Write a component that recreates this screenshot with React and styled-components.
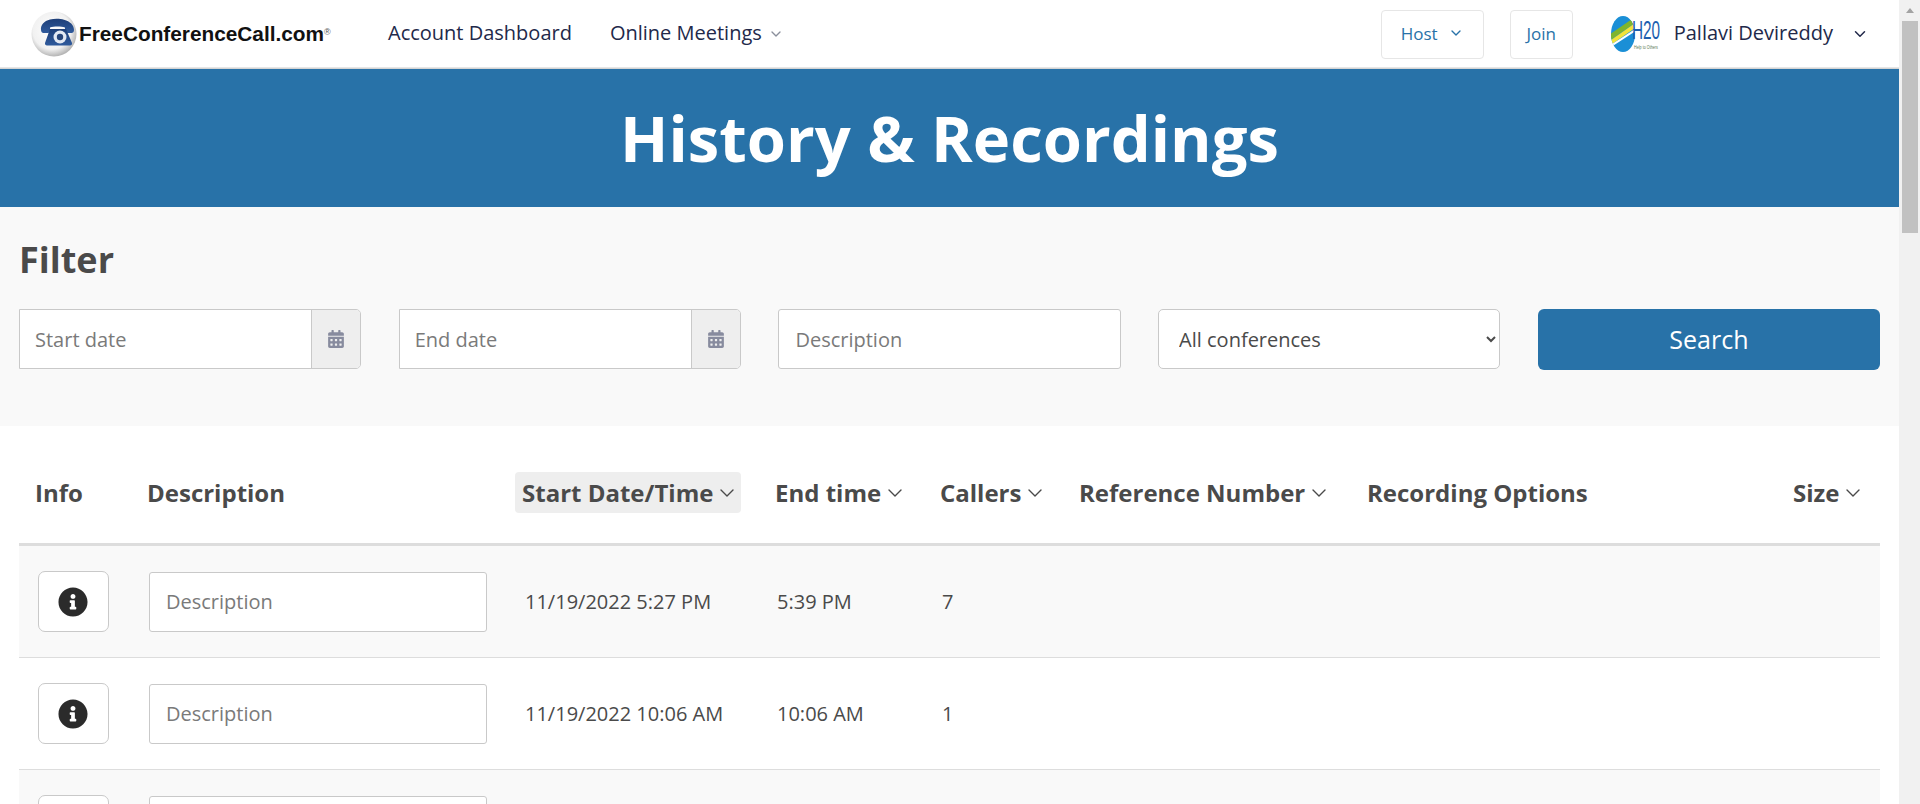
import React from "react";
import styled, { createGlobalStyle } from "styled-components";
import { ChevronDown } from "lucide-react";
import { FaCalendarAlt, FaInfoCircle } from "react-icons/fa";

const Global = createGlobalStyle`
  html, body { margin: 0; height: 804px; overflow: hidden; background: #fff; }
  body { font-family: "Open Sans", "Liberation Sans", sans-serif; color: #4a4a4a; }
  * { box-sizing: border-box; }
`;

const Shell = styled.div`display: flex; height: 804px; overflow: hidden;`;
const Main = styled.main`flex: 1; min-width: 0; overflow: hidden;`;
const Scrollbar = styled.div`
  width: 21px; flex: none; background: #f1f1f1; display: flex; flex-direction: column; align-items: center;
`;
const ScrollArrow = styled.div`
  height: 21px; width: 100%; display: flex; align-items: center; justify-content: center;
  &::before { content: ""; border-left: 4px solid transparent; border-right: 4px solid transparent; border-bottom: 5px solid #a3a3a3; }
`;
const ScrollThumb = styled.div`width: 16px; height: 212px; background: #c1c1c1;`;

const Header = styled.header`
  height: 69px; display: flex; align-items: center; padding-left: 31px; background: #fff;
  border-bottom: 1px solid #d4d4d4; box-shadow: inset 0 -1px 0 #e6e6e6;
`;
const Brand = styled.div`display: flex; align-items: center; width: 357px; flex: none;`;
const BrandName = styled.span`
  font-family: "Liberation Sans", Arial, sans-serif; font-weight: 700; font-size: 20.8px; color: #111; margin-left: 2px;
  sup { font-size: 9px; font-weight: 400; color: #555; vertical-align: 6px; line-height: 0; }
`;
const NavLink = styled.a`
  font-size: 20px; color: #22294a; display: inline-flex; align-items: center; margin: 0 ${p => p.$gap || 0}px 3px 0;
  svg { margin-left: 6px; color: #8a8f9c; margin-top: 2px; }
`;
const RightNav = styled.div`margin-left: auto; display: flex; align-items: center; padding-right: 30px;`;
const HeaderButton = styled.button`
  height: 49px; width: ${p => p.$w}px; margin-right: ${p => p.$gap}px; border: 1px solid #e6e6e6; border-radius: 4px; background: #fff;
  color: #2872a8; font: 400 17px "Open Sans", sans-serif; display: flex; align-items: center; justify-content: center; padding: 0 0 2px;
  svg { margin-left: 10px; }
`;
const UserName = styled.span`font-size: 20px; color: #22294a; margin: 0 18px 3px 14px;`;
const UserChevron = styled(ChevronDown)`color: #22294a;`;

const Banner = styled.div`
  height: 138px; background: #2872a8; color: #fff; display: flex; align-items: center; justify-content: center;
`;
const BannerTitle = styled.h1`margin: 0; font-size: 63.3px; font-weight: 700; line-height: 1;`;

const FilterSection = styled.section`height: 219px; background: #f9f9f9; padding: 29px 19px 0 19px;`;
const FilterTitle = styled.h2`margin: 0 0 25px; font-size: 36px; line-height: 48px; font-weight: 700; color: #4a4a4a;`;
const FilterGrid = styled.div`display: grid; grid-template-columns: repeat(5, 1fr); column-gap: 37.5px;`;
const DateGroup = styled.div`
  display: flex; height: 60px; border: 1px solid #c9c9c9; border-radius: 0 5px 5px 0; background: #fff; overflow: hidden;
`;
const DateInput = styled.input`
  flex: 1; min-width: 0; border: 0; outline: 0; padding: 0 15px; background: transparent; font: 400 20px "Open Sans", sans-serif; color: #4a4a4a;
  &::placeholder { color: #7a7a7a; opacity: 1; }
`;
const DateAddon = styled.span`
  width: 49px; flex: none; display: flex; align-items: center; justify-content: center; background: #eee; border-left: 1px solid #c9c9c9; color: #878b9e; font-size: 18px;
`;
const TextInput = styled.input`
  width: 100%; height: 60px; border: 1px solid #c9c9c9; border-radius: 3px; outline: 0; padding: 0 16px; background: #fff;
  font: 400 20px "Open Sans", sans-serif; color: #4a4a4a;
  &::placeholder { color: #7a7a7a; opacity: 1; }
`;
const Select = styled.select`
  width: 100%; height: 60px; border: 1px solid #c9c9c9; border-radius: 5px; padding: 0 16px; background: #fff;
  font: 400 20px "Open Sans", sans-serif; color: #4a4a4a; outline: 0;
`;
const SearchButton = styled.button`
  height: 61px; border: 0; border-radius: 6px; background: #2872a8; color: #fff; font: 400 25px "Open Sans", sans-serif; padding: 0 0 2px;
`;

const COLUMNS = "126px 368px 260px 165px 139px 288px 426px 90px";
const Table = styled.section`margin: 0 19px;`;
const HeadRow = styled.div`
  display: grid; grid-template-columns: ${COLUMNS}; align-items: center; height: 120px; padding-top: 16px; border-bottom: 3px solid #ddd;
`;
const HeadCell = styled.div`
  display: inline-flex; justify-self: start; align-items: center; height: 41px; padding-left: ${p => p.$pad ?? 2}px;
  font-size: 24px; font-weight: 700; color: #4a4a4a; white-space: nowrap;
  ${p => p.$active && `background: #eee; border-radius: 4px; padding: 0 2px 0 7px; margin-left: 2px;`}
  svg { margin-left: 2px; }
`;
const Row = styled.div`
  display: grid; grid-template-columns: ${COLUMNS}; align-items: center; height: 112px; border-bottom: 1px solid #ddd;
  background: ${p => p.$odd ? "#f9f9f9" : "#fff"};
`;
const InfoCell = styled.div`padding-left: 19px;`;
const InfoButton = styled.button`
  width: 71px; height: 61px; border: 1px solid #c9c9c9; border-radius: 7px; background: #fff; display: flex; align-items: center; justify-content: center;
  color: #2b2b2b; font-size: 30px; padding: 0 2px 0 0;
`;
const DescCell = styled.div`padding-left: 4px; padding-right: 26px;`;
const Cell = styled.div`font-size: 20px; color: #4a4a4a; padding-left: ${p => p.$pad ?? 4}px; white-space: nowrap;`;

const PhoneLogo = () => (
  <svg width="46" height="46" viewBox="0 0 46 46">
    <defs>
      <radialGradient id="ball" cx="45%" cy="42%" r="58%">
        <stop offset="0" stopColor="#ffffff" />
        <stop offset="0.72" stopColor="#f1f1f1" />
        <stop offset="1" stopColor="#b5b5b5" />
      </radialGradient>
      <linearGradient id="phone" x1="0" x2="0" y1="0" y2="1">
        <stop offset="0" stopColor="#1e3f78" />
        <stop offset="1" stopColor="#2f5a9c" />
      </linearGradient>
    </defs>
    <circle cx="23" cy="23" r="22.5" fill="url(#ball)" />
    <path d="M10 19c-.6-5 3-9 9-10.500 4-1 10-1 14 .2 6 1.800 10 5 10 10.300 0 2-1 3-2.500 3h-4.500c-1.500 0-2-1-2-2.500v-3c-4-1.200-11-1.200-15 0v3c0 1.500-.5 2.500-2 2.500H12.500C11 22 10.200 21 10 19z" fill="url(#phone)" />
    <path d="M19 18h16l6 14c.4 1.500-.6 2.500-2 2.500H16c-1.400 0-2.200-1-2-2.500z" fill="url(#phone)" />
    <circle cx="29" cy="26" r="6.500" fill="#e3e9f3" />
    <circle cx="29" cy="26" r="3.200" fill="#27457a" />
  </svg>
);

const H2OLogo = () => (
  <svg width="49" height="36" viewBox="0 0 49 36">
    <defs>
      <clipPath id="leaf"><ellipse cx="12" cy="18" rx="12" ry="18" /></clipPath>
    </defs>
    <g clipPath="url(#leaf)">
      <rect width="24" height="36" fill="#1b8fd6" />
      <path d="M-2 22L24 4" stroke="#7fb52c" strokeWidth="5" />
      <path d="M-1 27L25 9" stroke="#f2e33a" strokeWidth="4" />
      <path d="M0 30L26 13" stroke="#ffffff" strokeWidth="2" />
    </g>
    <text transform="translate(21 23) scale(.59 1)" fontFamily="Liberation Sans, Arial, sans-serif" fontSize="26" fill="#1d5fb0">H20</text>
    <text transform="translate(23 33) scale(.62 1)" fontFamily="Liberation Sans, Arial, sans-serif" fontSize="6" fill="#5d7a52">Help to Others</text>
  </svg>
);

const heads = [
  { label: "Info", pad: 16 },
  { label: "Description" },
  { label: "Start Date/Time", sort: true, active: true },
  { label: "End time", sort: true },
  { label: "Callers", sort: true },
  { label: "Reference Number", sort: true },
  { label: "Recording Options" },
  { label: "Size", sort: true },
];

const rows = [
  { date: "11/19/2022 5:27 PM", end: "5:39 PM", callers: "7", odd: true },
  { date: "11/19/2022 10:06 AM", end: "10:06 AM", callers: "1", odd: false },
  { odd: true },
];

export default function App() {
  return (
    <>
      <Global />
      <Shell>
        <Main>
          <Header>
            <Brand>
              <PhoneLogo />
              <BrandName>FreeConferenceCall.com<sup>®</sup></BrandName>
            </Brand>
            <NavLink $gap={38}>Account Dashboard</NavLink>
            <NavLink>Online Meetings<ChevronDown size={16} /></NavLink>
            <RightNav>
              <HeaderButton $w={103} $gap={26}>Host<ChevronDown size={16} /></HeaderButton>
              <HeaderButton $w={63} $gap={38}>Join</HeaderButton>
              <H2OLogo />
              <UserName>Pallavi Devireddy</UserName>
              <UserChevron size={18} />
            </RightNav>
          </Header>
          <Banner><BannerTitle>History &amp; Recordings</BannerTitle></Banner>
          <FilterSection>
            <FilterTitle>Filter</FilterTitle>
            <FilterGrid>
              <DateGroup><DateInput placeholder="Start date" /><DateAddon><FaCalendarAlt /></DateAddon></DateGroup>
              <DateGroup><DateInput placeholder="End date" /><DateAddon><FaCalendarAlt /></DateAddon></DateGroup>
              <TextInput placeholder="Description" />
              <Select defaultValue="all"><option value="all">All conferences</option></Select>
              <SearchButton>Search</SearchButton>
            </FilterGrid>
          </FilterSection>
          <Table>
            <HeadRow>
              {heads.map(h => (
                <HeadCell key={h.label} $pad={h.pad} $active={h.active}>
                  {h.label}{h.sort && <ChevronDown size={24} strokeWidth={1.4} />}
                </HeadCell>
              ))}
            </HeadRow>
            {rows.map((r, i) => (
              <Row key={i} $odd={r.odd}>
                <InfoCell><InfoButton aria-label="Info"><FaInfoCircle /></InfoButton></InfoCell>
                <DescCell><TextInput placeholder="Description" /></DescCell>
                <Cell $pad={12}>{r.date}</Cell>
                <Cell>{r.end}</Cell>
                <Cell>{r.callers}</Cell>
              </Row>
            ))}
          </Table>
        </Main>
        <Scrollbar>
          <ScrollArrow />
          <ScrollThumb />
        </Scrollbar>
      </Shell>
    </>
  );
}
